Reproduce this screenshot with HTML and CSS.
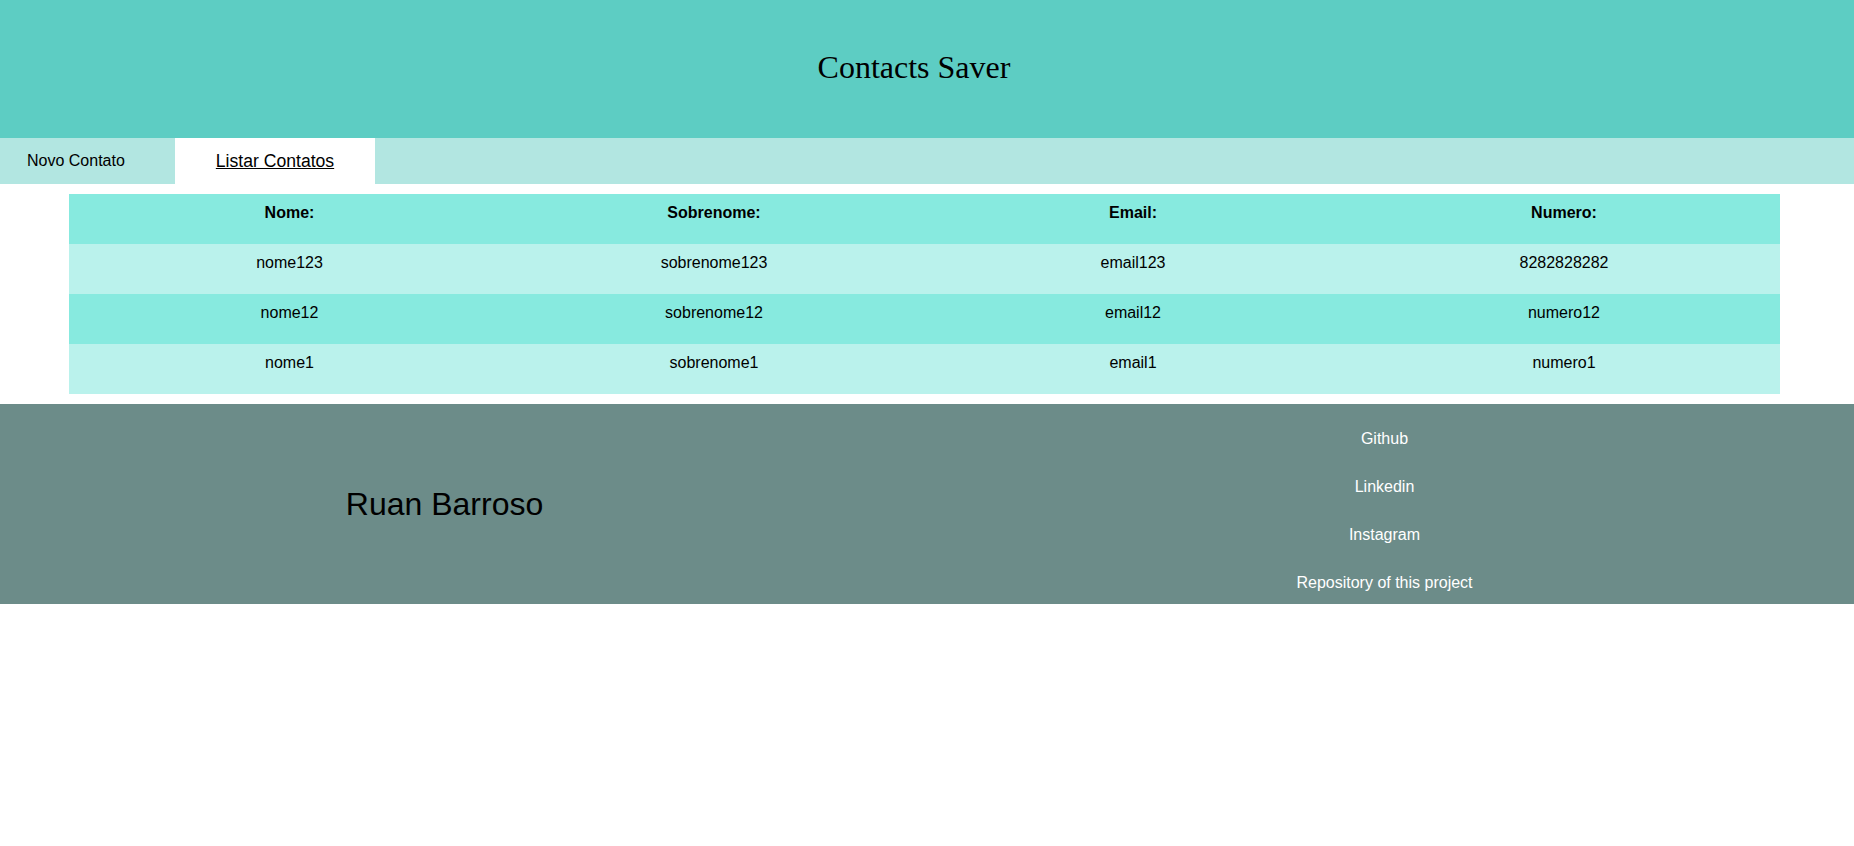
FILE: index.html
```html
<!DOCTYPE html>
<html lang="pt">
<head>
<meta charset="utf-8">
<title>Contacts Saver</title>
<link rel="stylesheet" href="styles.css">
</head>
<body>
<header class="site-header">
  <h1 class="site-title">Contacts Saver</h1>
</header>
<nav class="tabs">
  <a class="tab" href="#">Novo Contato</a>
  <a class="tab tab-active" href="#">Listar Contatos</a>
</nav>
<main class="content">
  <table class="contacts">
    <colgroup>
      <col class="col-1">
      <col class="col-2">
      <col class="col-3">
      <col class="col-4">
    </colgroup>
    <thead>
      <tr>
        <th>Nome:</th>
        <th>Sobrenome:</th>
        <th>Email:</th>
        <th>Numero:</th>
      </tr>
    </thead>
    <tbody>
      <tr class="row-light">
        <td>nome123</td>
        <td>sobrenome123</td>
        <td>email123</td>
        <td>8282828282</td>
      </tr>
      <tr class="row-dark">
        <td>nome12</td>
        <td>sobrenome12</td>
        <td>email12</td>
        <td>numero12</td>
      </tr>
      <tr class="row-light">
        <td>nome1</td>
        <td>sobrenome1</td>
        <td>email1</td>
        <td>numero1</td>
      </tr>
    </tbody>
  </table>
</main>
<footer class="site-footer">
  <div class="footer-name">Ruan Barroso</div>
  <ul class="footer-links">
    <li><a href="#">Github</a></li>
    <li><a href="#">Linkedin</a></li>
    <li><a href="#">Instagram</a></li>
    <li><a href="#">Repository of this project</a></li>
  </ul>
</footer>
</body>
</html>
```

FILE: styles.css
```css
html, body {
  margin: 0;
  padding: 0;
  background: #ffffff;
}

body {
  font-family: "Liberation Sans", Arial, sans-serif;
  font-size: 16px;
  color: #000;
}

.site-header {
  box-sizing: border-box;
  height: 138px;
  padding: 0 26px 4px 0;
  background: #5dcdc3;
  display: flex;
  align-items: center;
  justify-content: center;
}

.site-title {
  margin: 0;
  font-family: "Liberation Serif", "Times New Roman", serif;
  font-size: 32px;
  font-weight: normal;
  line-height: 37px;
  color: #000;
}

.tabs {
  display: flex;
  height: 46px;
  background: #b2e6e1;
}

.tab {
  display: flex;
  align-items: center;
  box-sizing: border-box;
  width: 175px;
  padding-left: 27px;
  color: #000;
  text-decoration: none;
  font-size: 16px;
}

.tab-active {
  width: 200px;
  padding-left: 0;
  justify-content: center;
  background: #ffffff;
  font-size: 17.6px;
  text-decoration: underline;
}

.content {
  padding: 10px 74px 10px 69px;
}

.contacts {
  width: 1711px;
  border-collapse: collapse;
  border-spacing: 0;
  table-layout: fixed;
}

.col-1 { width: 441px; }
.col-2 { width: 408px; }
.col-3 { width: 430px; }
.col-4 { width: 432px; }

.contacts th,
.contacts td {
  padding: 10px 0 22px;
  line-height: 18px;
  text-align: center;
  vertical-align: top;
  font-size: 16px;
}

.contacts th {
  font-weight: bold;
}

.contacts thead tr,
.row-dark {
  background: #87eadf;
}

.row-light {
  background: #baf2ec;
}

.site-footer {
  display: grid;
  grid-template-columns: 889px 1fr;
  align-items: center;
  background: #6c8c89;
}

.footer-name {
  text-align: center;
  font-size: 32px;
  line-height: 37px;
  color: #000;
}

.footer-links {
  list-style: none;
  margin: 0;
  padding: 26px 0 12px 26px;
  display: flex;
  flex-direction: column;
  align-items: center;
  gap: 30px;
}

.footer-links li {
  line-height: 18px;
}

.footer-links a {
  color: #ffffff;
  text-decoration: none;
  font-size: 16px;
}
```
